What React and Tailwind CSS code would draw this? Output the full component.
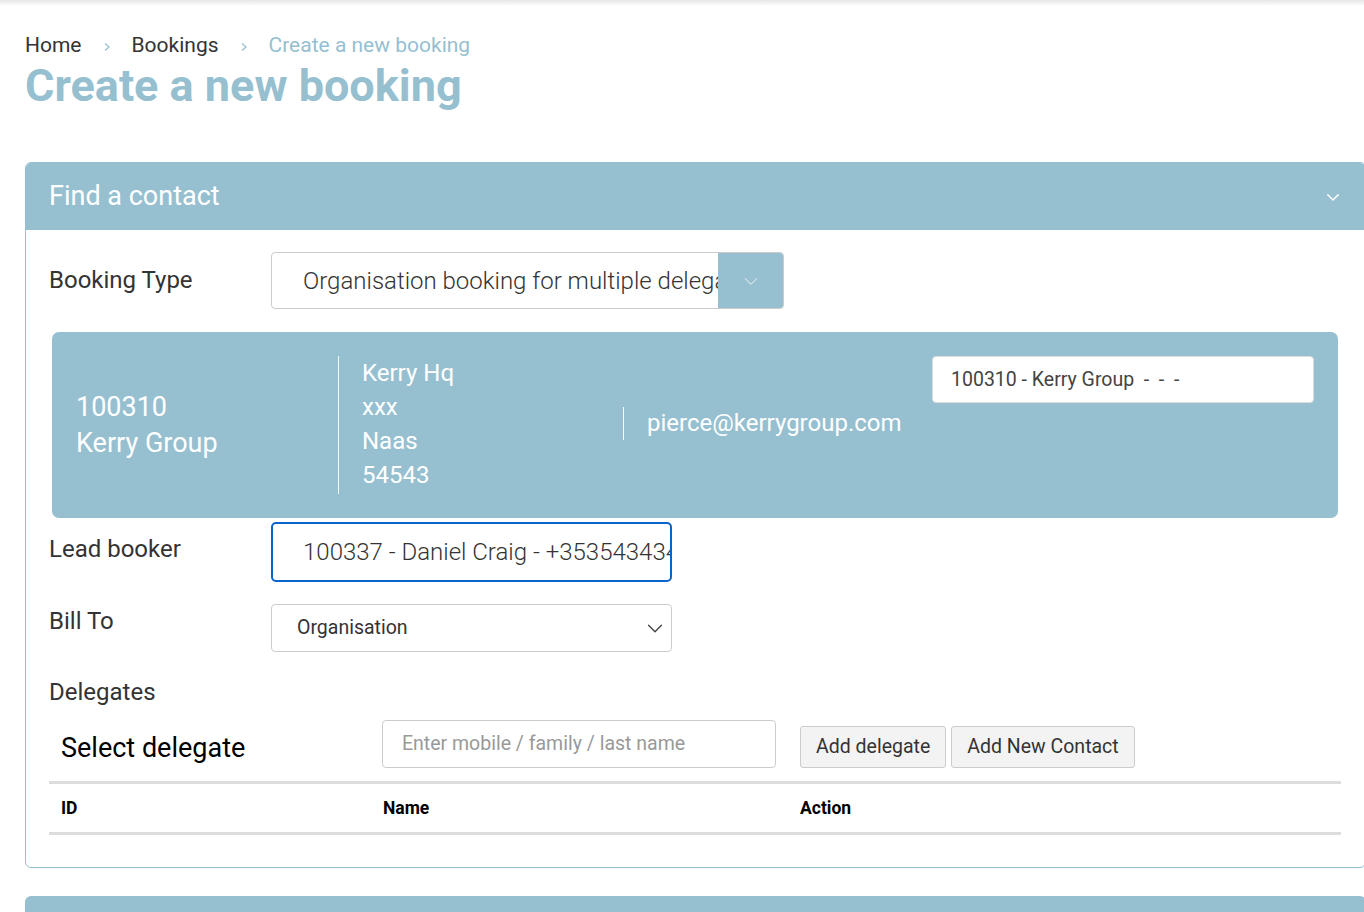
import React from 'react'

const blue = 'bg-[#96bfd0]'

const Chevron = ({ className = '', size = 18, stroke = 'currentColor', width = 1.5 }) => (
  <svg width={size} height={size} viewBox="0 0 24 24" fill="none" stroke={stroke} strokeWidth={width} strokeLinecap="round" strokeLinejoin="round" className={className}>
    <polyline points="5 9 12 16 19 9" />
  </svg>
)

const Crumb = () => (
  <svg width="10" height="12" viewBox="0 0 10 12" fill="none" stroke="#96bfd0" strokeWidth="1.2" className="mx-[20px] mt-[2px]">
    <polyline points="3 2.5 7 6 3 9.5" />
  </svg>
)

const FieldRow = ({ label, children, className = '' }) => (
  <div className={`flex items-start ${className}`}>
    <div className="w-[222px] shrink-0 text-[24px] text-[#333] leading-none">{label}</div>
    {children}
  </div>
)

export default function App() {
  return (
    <div className="min-h-[912px] w-[1364px] overflow-hidden bg-white font-['Roboto',sans-serif] relative">
      <div className="h-[6px] bg-gradient-to-b from-[#e6e6e6] to-white" />
      <div className="flex">
        <div className="w-[3px] mt-[24px] bg-[#f2f2f2] min-h-[890px]" />
        <div className="flex-1 pl-[25px]">
          {/* breadcrumb */}
          <div className="flex items-center text-[21px] mt-[29px] leading-none">
            <span className="text-[#333]">Home</span>
            <Crumb />
            <span className="text-[#333]">Bookings</span>
            <Crumb />
            <span className="text-[#96bfd0]">Create a new booking</span>
          </div>
          <h1 className="text-[45px] font-bold text-[#96bfd0] leading-none mt-[7px]">Create a new booking</h1>

          {/* card */}
          <div className="mt-[54px] w-[1341px] rounded-t-[6px] rounded-b-[6px] border border-[#96bfd0]">
            <div className={`${blue} h-[67px] flex items-center justify-between px-[23px] rounded-t-[5px]`}>
              <span className="text-white text-[27px]">Find a contact</span>
              <Chevron className="text-white" size={18} width={2} />
            </div>
            <div className="px-[23px] pt-[22px] pb-[32px]">
              <FieldRow label={<div className="pt-[16px]">Booking Type</div>}>
                <div className="flex w-[513px] h-[57px] border border-[#ccc] rounded-[4px] overflow-hidden">
                  <div className="flex-1 flex items-center pl-[31px] text-[24px] font-light text-[#333] whitespace-nowrap overflow-hidden">
                    Organisation booking for multiple delegates
                  </div>
                  <div className={`${blue} w-[65px] shrink-0 flex items-center justify-center`}>
                    <Chevron className="text-white" size={20} width={1} />
                  </div>
                </div>
              </FieldRow>

              {/* org panel */}
              <div className={`${blue} mt-[23px] ml-[3px] w-[1286px] h-[186px] rounded-[7px] flex text-white`}>
                <div className="w-[286px] shrink-0 pl-[24px] flex flex-col justify-center text-[27px] leading-[36px]">
                  <div>100310</div>
                  <div>Kerry Group</div>
                </div>
                <div className="my-[24px] w-px bg-white/90" />
                <div className="w-[284px] shrink-0 pl-[23px] pt-[24px] text-[24px] leading-[34px]">
                  <div>Kerry Hq</div>
                  <div>xxx</div>
                  <div>Naas</div>
                  <div>54543</div>
                </div>
                <div className="self-start mt-[75px] w-px h-[33px] bg-white/90" />
                <div className="w-[308px] shrink-0 pl-[23px] pt-[76px] text-[24px] leading-[30px] whitespace-nowrap">pierce@kerrygroup.com</div>
                <div className="pt-[24px]">
                  <div className="w-[382px] h-[47px] bg-white rounded-[4px] border border-[#ddd] flex items-center pl-[18px] text-[19.5px] text-[#444] whitespace-nowrap">
                    100310 - Kerry Group&nbsp; -&nbsp; -&nbsp; -
                  </div>
                </div>
              </div>

              <FieldRow label={<div className="pt-[15px]">Lead booker</div>} className="mt-[4px]">
                <div className="w-[401px] h-[60px] border-2 border-[#0b63ce] rounded-[5px] flex items-center pl-[30px] text-[24px] font-light text-[#333] whitespace-nowrap overflow-hidden">
                  100337 - Daniel Craig - +3535434343
                </div>
              </FieldRow>

              <FieldRow label={<div className="pt-[5px]">Bill To</div>} className="mt-[22px]">
                <div className="w-[401px] h-[48px] border border-[#ccc] rounded-[4px] flex items-center justify-between pl-[25px] pr-[5px] text-[19.5px] text-[#333]">
                  <span>Organisation</span>
                  <Chevron className="text-[#444]" size={22} width={1.5} />
                </div>
              </FieldRow>

              <div className="mt-[28px] text-[24px] text-[#333] leading-none">Delegates</div>

              <div className="flex items-start mt-[16px]">
                <div className="w-[333px] shrink-0 pl-[12px] pt-[15px] text-[27px] text-black leading-none">Select delegate</div>
                <div className="w-[394px] h-[48px] border border-[#ccc] rounded-[4px] flex items-center pl-[19px] text-[19.5px] text-[#999]">
                  Enter mobile / family / last name
                </div>
                <div className="flex gap-[5px] ml-[24px] mt-[6px]">
                  <div className="h-[42px] px-[15px] flex items-center bg-[#f3f3f3] border border-[#ccc] rounded-[3px] text-[19.5px] text-[#333]">Add delegate</div>
                  <div className="h-[42px] px-[15px] flex items-center bg-[#f3f3f3] border border-[#ccc] rounded-[3px] text-[19.5px] text-[#333]">Add New Contact</div>
                </div>
              </div>

              <div className="mt-[13px] w-[1292px] border-t-[3px] border-b-[3px] border-[#dddddd] h-[54px] flex items-center text-[17.5px] font-bold text-black">
                <div className="w-[334px] pl-[12px]">ID</div>
                <div className="w-[417px]">Name</div>
                <div>Action</div>
              </div>
            </div>
          </div>

          <div className={`${blue} mt-[28px] w-[1341px] h-[40px] rounded-t-[6px]`} />
        </div>
      </div>
    </div>
  )
}
